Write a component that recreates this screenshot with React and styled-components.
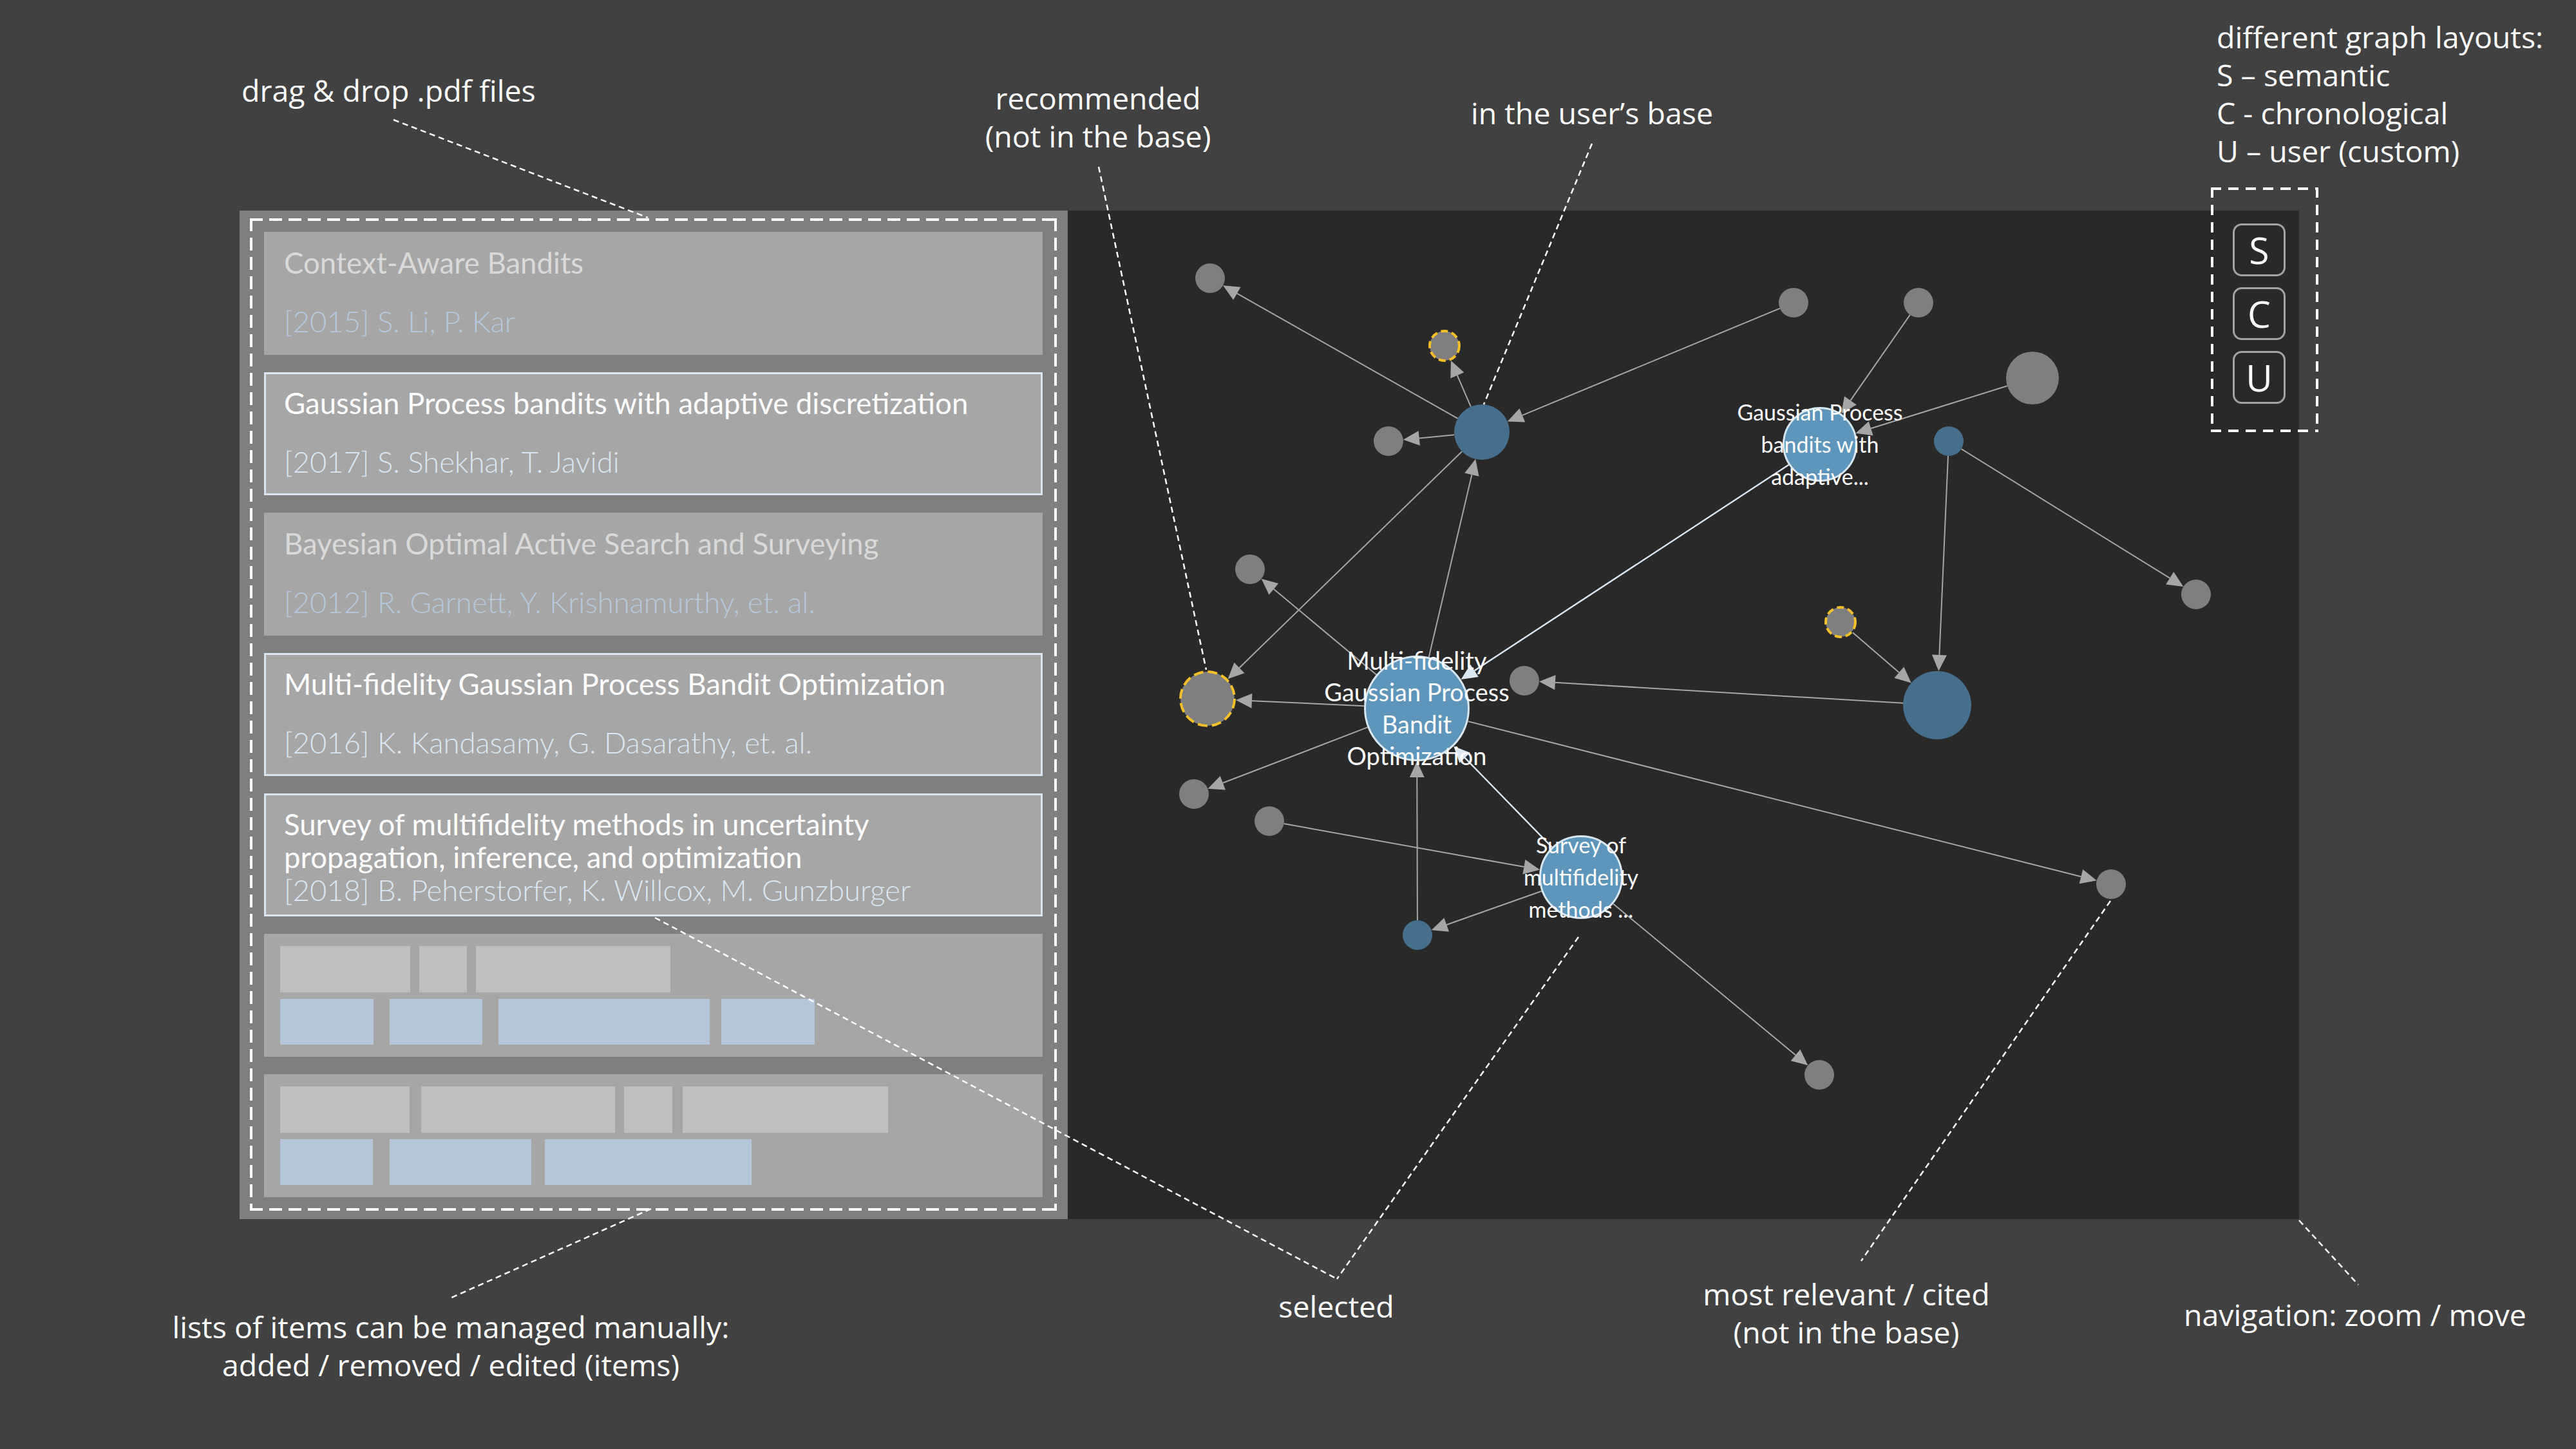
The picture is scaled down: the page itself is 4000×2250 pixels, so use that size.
import React from 'react';
import styled, { createGlobalStyle, css } from 'styled-components';

const GlobalStyle = createGlobalStyle`
  html, body {
    margin: 0;
    padding: 0;
    background: #414141;
  }
  body {
    width: 4000px;
    height: 2250px;
    overflow: hidden;
  }
`

// dashed outline drawn with gradients so the dash length matches the mockup
const dashedFrame = (dash, gap, w) => css`
    background:
      repeating-linear-gradient(90deg, #fff 0 ${dash}px, transparent ${dash}px ${dash + gap}px) top left / 100% ${w}px no-repeat,
      repeating-linear-gradient(90deg, #fff 0 ${dash}px, transparent ${dash}px ${dash + gap}px) bottom left / 100% ${w}px no-repeat,
      repeating-linear-gradient(180deg, #fff 0 ${dash}px, transparent ${dash}px ${dash + gap}px) top left / ${w}px 100% no-repeat,
      repeating-linear-gradient(180deg, #fff 0 ${dash}px, transparent ${dash}px ${dash + gap}px) top right / ${w}px 100% no-repeat;
`

const Page = styled.div`
    position: relative;
    width: 4000px;
    height: 2250px;
    box-sizing: border-box;
    padding: 327px 430px 0 372px;
    background: #414141;
    font-family: "Open Sans", "DejaVu Sans", sans-serif;
    color: #fff;
`

const Workspace = styled.div`
    display: flex;
    height: 1566px;
`

const ListPanel = styled.div`
    width: 1286px;
    flex-shrink: 0;
    box-sizing: border-box;
    display: flex;
    padding: 12px 17px 13px 16px;
    background: #7f7f7f;
`

const DropZone = styled.div`
    flex: 1;
    display: flex;
    flex-direction: column;
    gap: 27px;
    padding: 21px 22px;
    ${dashedFrame(20, 10, 4)}
`

const Card = styled.div`
    height: 191px;
    box-sizing: border-box;
    display: flex;
    flex-direction: column;
    justify-content: space-between;
    padding: 19px 28px 24px 28px;
    background: #a6a6a6;
    border: 3px solid ${p => (p.$selected ? '#d9e6f1' : 'transparent')};
    font-family: Lato, "Liberation Sans", sans-serif;
    font-size: 45.5px;
    line-height: 51px;
`

const Title = styled.div`
    font-weight: 400;
    color: ${p => (p.$selected ? '#ffffff' : '#d9d9d9')};
`

const Meta = styled.div`
    font-weight: 300;
    color: ${p => (p.$selected ? '#dae6f1' : '#b6c9dc')};
`

const SkeletonCard = styled.div`
    height: 191px;
    box-sizing: border-box;
    display: flex;
    flex-direction: column;
    gap: 10px;
    padding: 16px 22px;
    background: #a6a6a6;
    border: 3px solid transparent;
`

const SkeletonRow = styled.div`
    display: flex;
    height: 75px;
`

const Block = styled.div`
    width: ${p => p.$w}px;
    margin-left: ${p => p.$ml || 0}px;
    background: ${p => (p.$blue ? '#b4c6d8' : '#bfbfbf')};
`

const GraphArea = styled.div`
    flex: 1;
    position: relative;
    background: #292929;
`

const GraphSvg = styled.svg`
    display: block;
    width: 100%;
    height: 100%;
`

const LayoutSwitch = styled.div`
    position: absolute;
    left: 1775px;
    top: -36px;
    width: 167px;
    height: 380px;
    box-sizing: border-box;
    display: flex;
    flex-direction: column;
    gap: 17px;
    padding: 56px 0 0 34px;
    ${dashedFrame(16, 11, 4)}
`

const LayoutButton = styled.div`
    width: 82px;
    height: 82px;
    box-sizing: border-box;
    display: flex;
    align-items: center;
    justify-content: center;
    border: 3px solid #a3a3a3;
    border-radius: 14px;
    background: #292929;
    color: #ffffff;
    font-size: 57px;
    line-height: 1;
`

const Callout = styled.div`
    position: absolute;
    left: ${p => p.$x}px;
    top: ${p => p.$y}px;
    transform: ${p => (p.$center ? 'translateX(-50%)' : 'none')};
    text-align: ${p => (p.$center ? 'center' : 'left')};
    white-space: nowrap;
    font-size: 46.5px;
    line-height: 59px;
    color: #ffffff;
`

const Leaders = styled.svg`
    position: absolute;
    left: 0;
    top: 0;
    width: 4000px;
    height: 2250px;
    pointer-events: none;
`

const PAPERS = [
  { title: ['Context-Aware Bandits'], meta: '[2015] S. Li, P. Kar' },
  { title: ['Gaussian Process bandits with adaptive discretization'], meta: '[2017] S. Shekhar, T. Javidi', selected: true },
  { title: ['Bayesian Optimal Active Search and Surveying'], meta: '[2012] R. Garnett, Y. Krishnamurthy, et. al.' },
  { title: ['Multi-fidelity Gaussian Process Bandit Optimization'], meta: '[2016] K. Kandasamy, G. Dasarathy, et. al.', selected: true },
  { title: ['Survey of multifidelity methods in uncertainty', 'propagation, inference, and optimization'], meta: '[2018] B. Peherstorfer, K. Willcox, M. Gunzburger', selected: true },
]

const SKELETONS = [
  [
    [{ w: 202 }, { w: 74, ml: 14 }, { w: 302, ml: 14 }],
    [{ w: 145, blue: true }, { w: 144, ml: 25, blue: true }, { w: 328, ml: 25, blue: true }, { w: 145, ml: 18, blue: true }],
  ],
  [
    [{ w: 201 }, { w: 301, ml: 18 }, { w: 75, ml: 14 }, { w: 319, ml: 16 }],
    [{ w: 144, blue: true }, { w: 220, ml: 26, blue: true }, { w: 321, ml: 21, blue: true }],
  ],
]

// graph nodes, page coordinates
const NODES = {
  n1: { x: 1879, y: 432, r: 23, kind: 'other' },
  n2: { x: 2243, y: 537, r: 23, kind: 'recommended' },
  n3: { x: 2301, y: 671, r: 43, kind: 'base' },
  n4: { x: 2156, y: 685, r: 23, kind: 'other' },
  n5: { x: 2785, y: 470, r: 23, kind: 'other' },
  n6: { x: 2979, y: 470, r: 23, kind: 'other' },
  n7: { x: 2826, y: 690, r: 56.5, kind: 'selected', label: ['Gaussian Process', 'bandits with', 'adaptive...'], size: 34 },
  n8: { x: 3026, y: 685, r: 23, kind: 'base' },
  n9: { x: 1941, y: 884, r: 23, kind: 'other' },
  n10: { x: 1875, y: 1085, r: 42, kind: 'recommended' },
  n11: { x: 2200, y: 1100, r: 80.5, kind: 'selected', label: ['Multi-fidelity', 'Gaussian Process', 'Bandit', 'Optimization'], size: 38 },
  n12: { x: 2367, y: 1057, r: 23, kind: 'other' },
  n13: { x: 2858, y: 966, r: 23, kind: 'recommended' },
  n14: { x: 3008, y: 1095, r: 53, kind: 'base' },
  n15: { x: 1854, y: 1233, r: 23, kind: 'other' },
  n16: { x: 1971, y: 1275, r: 23, kind: 'other' },
  n17: { x: 2455, y: 1362, r: 63.5, kind: 'selected', label: ['Survey of', 'multifidelity', 'methods ...'], size: 34 },
  n18: { x: 2201, y: 1452, r: 23, kind: 'base' },
  n19: { x: 2825, y: 1669, r: 23, kind: 'other' },
  n20: { x: 3278, y: 1373, r: 23, kind: 'other' },
  n21: { x: 3156, y: 587, r: 41, kind: 'other' },
  n22: { x: 3410, y: 923, r: 23, kind: 'other' },
}

const EDGES = [
  ['n3', 'n1'], ['n3', 'n2'], ['n5', 'n3'], ['n3', 'n4'], ['n3', 'n10'],
  ['n11', 'n3'], ['n11', 'n9'], ['n7', 'n11', true], ['n6', 'n7'], ['n21', 'n7'],
  ['n8', 'n14'], ['n8', 'n22'], ['n13', 'n14'], ['n14', 'n12'], ['n11', 'n10'],
  ['n11', 'n15'], ['n11', 'n20'], ['n16', 'n17'], ['n18', 'n11'], ['n17', 'n11', true],
  ['n17', 'n18'], ['n17', 'n19'],
]

const FILL = { other: '#7f7f7f', recommended: '#7f7f7f', base: '#476f8c', selected: '#5e95ba' }

const outer = n => n.r + (n.kind === 'selected' ? 1.5 : n.kind === 'recommended' ? 2 : 0)

const Edge = ({ from, to, light }) => {
  const a = NODES[from]
  const b = NODES[to]
  const dx = b.x - a.x
  const dy = b.y - a.y
  const len = Math.hypot(dx, dy)
  const ux = dx / len
  const uy = dy / len
  const tipX = b.x - ux * outer(b)
  const tipY = b.y - uy * outer(b)
  const baseX = tipX - ux * 25
  const baseY = tipY - uy * 25
  const color = light ? '#dbe8f3' : '#a6a6a6'
  return (
    <g>
      <line x1={a.x + ux * outer(a)} y1={a.y + uy * outer(a)} x2={baseX} y2={baseY} stroke={color} strokeWidth={light ? 2.4 : 2} />
      <polygon
        points={`${tipX},${tipY} ${baseX - uy * 11.5},${baseY + ux * 11.5} ${baseX + uy * 11.5},${baseY - ux * 11.5}`}
        fill={color}
      />
    </g>
  )
}

const Node = ({ node }) => {
  if (node.kind === 'recommended') {
    return (
      <circle cx={node.x} cy={node.y} r={node.r} fill={FILL.other} stroke="#f3bf2a" strokeWidth="4"
        strokeDasharray={node.r > 30 ? '15 7' : '11 6'} />
    )
  }
  if (node.kind === 'selected') {
    return <circle cx={node.x} cy={node.y} r={node.r} fill={FILL.selected} stroke="#d6e6f2" strokeWidth="3" />
  }
  return <circle cx={node.x} cy={node.y} r={node.r} fill={FILL[node.kind]} />
}

const NodeLabel = ({ node }) => {
  const step = node.size > 36 ? 49.5 : 50
  const shift = node.size > 36 ? 14 : 13
  const n = node.label.length
  return (
    <text textAnchor="middle" fill="#ffffff" fontFamily="Lato, 'Liberation Sans', sans-serif" fontSize={node.size}>
      {node.label.map((line, i) => (
        <tspan key={line} x={node.x} y={node.y + (i - (n - 1) / 2) * step + shift}>{line}</tspan>
      ))}
    </text>
  )
}

const LEADERS = [
  [611, 186, 1006, 338],
  [1706, 259, 1873, 1040],
  [2472, 223, 2304, 628],
  [1017, 1425, 2076, 1986],
  [2451, 1455, 2076, 1986],
  [3277, 1399, 2890, 1958],
  [3570, 1895, 3662, 1995],
  [1011, 1877, 701, 2015],
]

const App = () => {
  const nodes = Object.values(NODES)
  return (
    <Page>
      <GlobalStyle />
      <Workspace>
        <ListPanel>
          <DropZone>
            {PAPERS.map(p => (
              <Card key={p.meta} $selected={p.selected}>
                <Title $selected={p.selected}>
                  {p.title.map((line, i) => (
                    <React.Fragment key={line}>
                      {i > 0 && <br />}
                      {line}
                    </React.Fragment>
                  ))}
                </Title>
                <Meta $selected={p.selected}>{p.meta}</Meta>
              </Card>
            ))}
            {SKELETONS.map((rows, ci) => (
              <SkeletonCard key={ci}>
                {rows.map((row, ri) => (
                  <SkeletonRow key={ri}>
                    {row.map((b, bi) => (
                      <Block key={bi} $w={b.w} $ml={b.ml} $blue={b.blue} />
                    ))}
                  </SkeletonRow>
                ))}
              </SkeletonCard>
            ))}
          </DropZone>
        </ListPanel>

        <GraphArea>
          <GraphSvg viewBox="1658 327 1912 1566" preserveAspectRatio="none">
            {EDGES.map(([a, b, light]) => (
              <Edge key={a + b} from={a} to={b} light={light} />
            ))}
            {nodes.map((n, i) => (
              <Node key={i} node={n} />
            ))}
            {nodes.filter(n => n.label).map((n, i) => (
              <NodeLabel key={i} node={n} />
            ))}
          </GraphSvg>
          <LayoutSwitch>
            <LayoutButton>S</LayoutButton>
            <LayoutButton>C</LayoutButton>
            <LayoutButton>U</LayoutButton>
          </LayoutSwitch>
        </GraphArea>
      </Workspace>

      <Callout $x={375} $y={111}>drag &amp; drop .pdf files</Callout>
      <Callout $x={1705} $y={123} $center>recommended<br />(not in the base)</Callout>
      <Callout $x={2472} $y={146} $center>in the user’s base</Callout>
      <Callout $x={3442} $y={28}>
        different graph layouts:<br />
        S – semantic<br />
        C - chronological<br />
        U – user (custom)
      </Callout>
      <Callout $x={700} $y={2031} $center>lists of items can be managed manually:<br />added / removed / edited (items)</Callout>
      <Callout $x={2075} $y={1999} $center>selected</Callout>
      <Callout $x={2867} $y={1980} $center>most relevant / cited<br />(not in the base)</Callout>
      <Callout $x={3391} $y={2012}>navigation: zoom / move</Callout>

      <Leaders viewBox="0 0 4000 2250">
        {LEADERS.map(([x1, y1, x2, y2], i) => (
          <line key={i} x1={x1} y1={y1} x2={x2} y2={y2} stroke="#ffffff" strokeWidth="2.5" strokeDasharray="9 6" />
        ))}
      </Leaders>
    </Page>
  )
}

export default App
